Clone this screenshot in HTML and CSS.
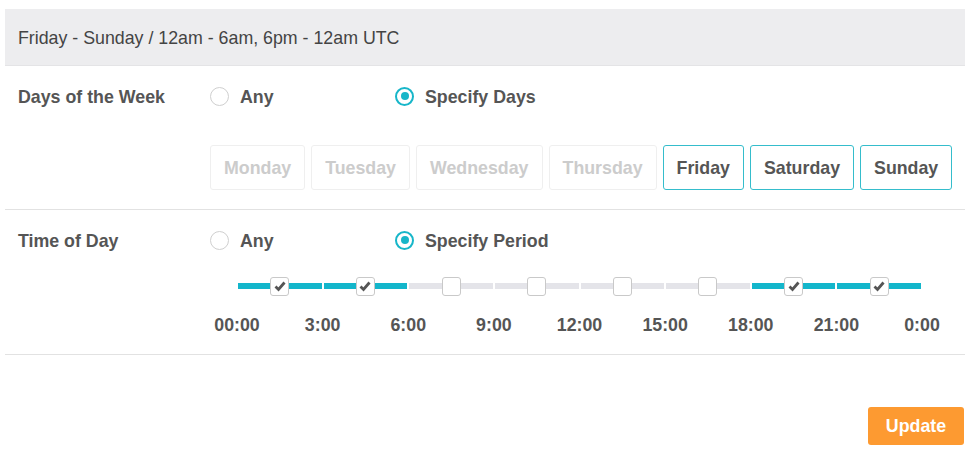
FILE: index.html
```html
<!DOCTYPE html>
<html>
<head>
    <title>Schedule</title>
    <link rel="stylesheet" href="styles.css">
</head>
<body>
    <div id="container">
        <div class="summary">Friday - Sunday / 12am - 6am, 6pm - 12am UTC</div>

        <div class="row">
            <div class="row-label">Days of the Week</div>
            <div class="row-body">
                <div class="options">
                    <label class="option"><span class="radio"></span>Any</label>
                    <label class="option"><span class="radio checked"></span>Specify Days</label>
                </div>
                <div class="days">
                    <button class="day">Monday</button>
                    <button class="day">Tuesday</button>
                    <button class="day">Wednesday</button>
                    <button class="day">Thursday</button>
                    <button class="day active">Friday</button>
                    <button class="day active">Saturday</button>
                    <button class="day active">Sunday</button>
                </div>
            </div>
        </div>

        <div class="row">
            <div class="row-label">Time of Day</div>
            <div class="row-body">
                <div class="options">
                    <label class="option"><span class="radio"></span>Any</label>
                    <label class="option"><span class="radio checked"></span>Specify Period</label>
                </div>
                <div class="slider">
                    <div class="segment on"><span class="box"><svg viewBox="0 0 12 12"><path d="M1.5 6.5 L4.5 9.5 L10.5 2.5" /></svg></span></div>
                    <div class="segment on"><span class="box"><svg viewBox="0 0 12 12"><path d="M1.5 6.5 L4.5 9.5 L10.5 2.5" /></svg></span></div>
                    <div class="segment"><span class="box"></span></div>
                    <div class="segment"><span class="box"></span></div>
                    <div class="segment"><span class="box"></span></div>
                    <div class="segment"><span class="box"></span></div>
                    <div class="segment on"><span class="box"><svg viewBox="0 0 12 12"><path d="M1.5 6.5 L4.5 9.5 L10.5 2.5" /></svg></span></div>
                    <div class="segment on"><span class="box"><svg viewBox="0 0 12 12"><path d="M1.5 6.5 L4.5 9.5 L10.5 2.5" /></svg></span></div>
                </div>
                <div class="hours">
                    <span>00:00</span>
                    <span>3:00</span>
                    <span>6:00</span>
                    <span>9:00</span>
                    <span>12:00</span>
                    <span>15:00</span>
                    <span>18:00</span>
                    <span>21:00</span>
                    <span>0:00</span>
                </div>
            </div>
        </div>

        <div class="actions">
            <button class="update">Update</button>
        </div>
    </div>
</body>
</html>
```

FILE: styles.css
```css
body {
    font-family: "Liberation Sans", Arial, sans-serif;
    margin: 0;
    padding: 0;
    background-color: #fff;
    color: #555;
    font-size: 17.8px;
}
#container {
    width: 960px;
    margin: 9px 0 0 5px;
}
.summary {
    height: 57px;
    line-height: 59px;
    padding-left: 13px;
    background-color: #ededef;
    border-bottom: 1px solid #e4e4e6;
    color: #444;
    box-sizing: border-box;
}
.row {
    display: flex;
    padding: 21px 0 19px 13px;
    border-bottom: 1px solid #e2e2e2;
}
.row-label {
    width: 192px;
    flex-shrink: 0;
    font-weight: bold;
    line-height: 20px;
}
.row-body {
    flex: 1;
}
.options {
    display: flex;
    height: 20px;
    align-items: center;
}
.option {
    display: flex;
    align-items: center;
    width: 185px;
    font-weight: bold;
}
.radio {
    width: 19px;
    height: 19px;
    border: 1px solid #cfcfcf;
    border-radius: 50%;
    box-sizing: border-box;
    margin-right: 11px;
    position: relative;
    top: -1px;
}
.radio.checked {
    border: 2px solid #17b6c9;
}
.radio.checked::after {
    content: "";
    position: absolute;
    left: 3.5px;
    top: 3.5px;
    width: 8px;
    height: 8px;
    border-radius: 50%;
    background-color: #17b6c9;
}
.days {
    display: flex;
    gap: 6px;
    margin-top: 38px;
}
.day {
    height: 45px;
    padding: 1px 13px 0;
    font-family: inherit;
    font-size: 17.8px;
    font-weight: bold;
    color: #ccc;
    background-color: #fff;
    border: 1px solid #efefef;
    border-radius: 3px;
}
.day.active {
    color: #555;
    border-color: #35bdcc;
}
.slider {
    display: flex;
    margin: 25px 0 0 27px;
    width: 685px;
    height: 20px;
}
.segment {
    flex: 1;
    display: flex;
    align-items: center;
    justify-content: center;
    position: relative;
}
.segment::before {
    content: "";
    position: absolute;
    left: 1px;
    right: 1px;
    top: 7px;
    height: 6px;
    background-color: #e4e4e9;
}
.segment.on::before {
    background-color: #13b6cb;
}
.box {
    position: relative;
    width: 19px;
    height: 19px;
    background-color: #fff;
    border: 1px solid #c9c9c9;
    border-radius: 3px;
    box-sizing: border-box;
    display: flex;
    align-items: center;
    justify-content: center;
}
.box svg {
    width: 12px;
    height: 12px;
    fill: none;
    stroke: #555;
    stroke-width: 2.8;
}
.hours {
    display: flex;
    justify-content: space-between;
    width: 745px;
    margin: 19px 0 0 -3px;
    font-weight: bold;
    line-height: 20px;
}
.hours span {
    width: 60px;
    text-align: center;
}
.actions {
    display: flex;
    justify-content: flex-end;
    margin-top: 52px;
}
.update {
    width: 96px;
    height: 38px;
    margin-right: 1px;
    padding-top: 2px;
    font-family: inherit;
    font-size: 17.8px;
    font-weight: bold;
    color: #fff;
    background-color: #fd9a31;
    border: none;
    border-radius: 3px;
}
```
